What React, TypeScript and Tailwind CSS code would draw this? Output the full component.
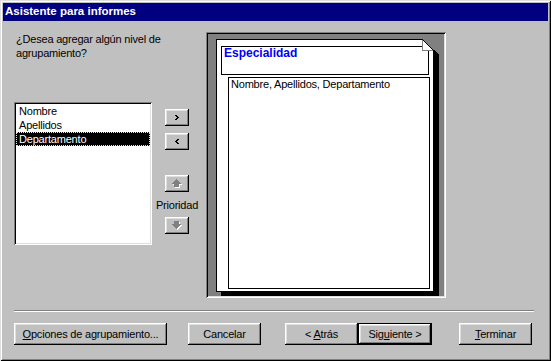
import React from "react";

type C = string | null;

function Pix({ w, h, color }: { w: number; h: number; color: (x: number, y: number) => C }) {
  const rects: React.ReactElement[] = [];
  for (let y = 0; y < h; y++) {
    let x = 0;
    while (x < w) {
      const c = color(x, y);
      let e = x + 1;
      while (e < w && color(e, y) === c) e++;
      if (c) rects.push(<rect key={`${x}-${y}`} x={x} y={y} width={e - x} height={1} fill={c} />);
      x = e;
    }
  }
  return (
    <svg width={w} height={h} viewBox={`0 0 ${w} ${h}`} shapeRendering="crispEdges" className="block">
      {rects}
    </svg>
  );
}

const rowsFn = (rows: string[]) => (x: number, y: number) =>
  y >= 0 && y < rows.length && x >= 0 && rows[y][x] === "X";

const chevR = rowsFn(["XX..", ".XX.", "..XX", ".XX.", "XX.."]);
const chevL = rowsFn(["..XX", ".XX.", "XX..", ".XX.", "..XX"]);
const upArrow = rowsFn([
  "....X....",
  "...XXX...",
  "..XXXXX..",
  ".XXXXXXX.",
  "XXXXXXXXX",
  "..XXXXX..",
  "..XXXXX..",
  "..XXXXX..",
]);
const downArrow = rowsFn([
  "..XXXXX..",
  "..XXXXX..",
  "..XXXXX..",
  "XXXXXXXXX",
  ".XXXXXXX.",
  "..XXXXX..",
  "...XXX...",
  "....X....",
]);

const disabled = (f: (x: number, y: number) => boolean) => (x: number, y: number): C =>
  f(x, y) ? "#808080" : f(x - 1, y - 1) ? "#ffffff" : null;

const foldColor = (x: number, y: number): C => {
  if (x <= 11) {
    if (y > 11) return null;
    if (x === y) return "#000000";
    if (x > y) return "#808080";
    if (x === 0 || y === 11) return "#808080";
    return "#ffffff";
  }
  if (x <= 16) return y >= x - 1 ? "#000000" : "#808080";
  return "#808080";
};

const raised =
  "bg-[#c0c0c0] shadow-[inset_-1px_-1px_0_#000,inset_1px_1px_0_#fff,inset_-2px_-2px_0_#808080,inset_2px_2px_0_#dfdfdf]";

function SmallBtn({ children, className }: { children: React.ReactNode; className?: string }) {
  return (
    <div className={`w-[24px] h-[17px] flex items-center justify-center ${raised} ${className ?? ""}`}>{children}</div>
  );
}

export default function App() {
  return (
    <div className="w-[551px] h-[361px] bg-[#c0c0c0] p-[3px] flex flex-col overflow-hidden font-['Liberation_Sans',Arial,sans-serif] text-[11px] tracking-[-0.2px] text-black shadow-[inset_1px_1px_0_#dfdfdf,inset_-1px_-1px_0_#000,inset_2px_2px_0_#fff,inset_-2px_-2px_0_#808080]">
      <div className="h-[18px] shrink-0 bg-[#000080] text-white font-bold text-[11.5px] tracking-normal flex items-center pl-[2px] leading-none">
        Asistente para informes
      </div>

      <div className="flex mt-[11px] pl-[11px]">
        <div className="w-[192px] flex flex-col">
          <p className="ml-[2px] leading-[14px]">
            ¿Desea agregar algún nivel de
            <br />
            agrupamiento?
          </p>
          <div className="flex mt-[42px]">
            <div className="w-[138px] h-[143px] bg-white p-[2px] shadow-[inset_1px_1px_0_#808080,inset_-1px_-1px_0_#fff,inset_2px_2px_0_#000,inset_-2px_-2px_0_#dfdfdf]">
              <div className="h-[14px] leading-[12px] pl-[2px] border border-transparent">Nombre</div>
              <div className="h-[14px] leading-[12px] pl-[2px] border border-transparent">Apellidos</div>
              <div className="h-[14px] leading-[12px] pl-[2px] border border-dotted border-[#e8e8e8] bg-black text-white">
                Departamento
              </div>
            </div>
            <div className="w-[44px] ml-[3px] flex flex-col items-center">
              <SmallBtn className="mt-[7px]">
                <Pix w={4} h={5} color={(x, y) => (chevR(x, y) ? "#000" : null)} />
              </SmallBtn>
              <SmallBtn className="mt-[7px]">
                <Pix w={4} h={5} color={(x, y) => (chevL(x, y) ? "#000" : null)} />
              </SmallBtn>
              <SmallBtn className="mt-[25px]">
                <Pix w={10} h={9} color={disabled(upArrow)} />
              </SmallBtn>
              <div className="mt-[6px] leading-[14px]">Prioridad</div>
              <SmallBtn className="mt-[5px]">
                <Pix w={10} h={9} color={disabled(downArrow)} />
              </SmallBtn>
            </div>
          </div>
        </div>

        <div className="w-[240px] h-[266px] bg-[#808080] pl-[10px] pt-[7px] shadow-[inset_1px_1px_0_#808080,inset_-1px_-1px_0_#fff,inset_2px_2px_0_#000,inset_-2px_-2px_0_#dfdfdf]">
          <div className="relative w-[218px] h-[253px] bg-white border border-black shadow-[5px_4px_0_#000]">
            <div className="ml-[4px] mt-[6px] w-[208px] h-[29px] border border-black pl-[2px]">
              <div className="text-[#0000ff] font-bold text-[12px] leading-[12px] tracking-normal">Especialidad</div>
            </div>
            <div className="ml-[11px] mt-[2px] w-[202px] h-[212px] border border-black pl-[2px] leading-[13px]">
              Nombre, Apellidos, Departamento
            </div>
            <div className="absolute top-[-1px] right-[-7px]">
              <Pix w={18} h={16} color={foldColor} />
            </div>
          </div>
        </div>
      </div>

      <div className="mt-[12px] ml-[11px] w-[520px] h-[2px] border-t border-[#808080] border-b-white border-b" />

      <div className="flex mt-[11px] ml-[11px]">
        <div className={`w-[153px] h-[22px] flex items-center justify-center ${raised}`}>
          <span>
            <u>O</u>pciones de agrupamiento...
          </span>
        </div>
        <div className={`ml-[21px] w-[73px] h-[22px] flex items-center justify-center ${raised}`}>Cancelar</div>
        <div className={`ml-[24px] w-[73px] h-[22px] flex items-center justify-center ${raised}`}>
          <span>
            &lt; <u>A</u>trás
          </span>
        </div>
        <div className={`w-[74px] h-[22px] flex items-center justify-center border border-black ${raised}`}>
          <span>
            Sig<u>u</u>iente &gt;
          </span>
        </div>
        <div className={`ml-[27px] w-[73px] h-[22px] flex items-center justify-center ${raised}`}>
          <span>
            <u>T</u>erminar
          </span>
        </div>
      </div>
    </div>
  );
}
